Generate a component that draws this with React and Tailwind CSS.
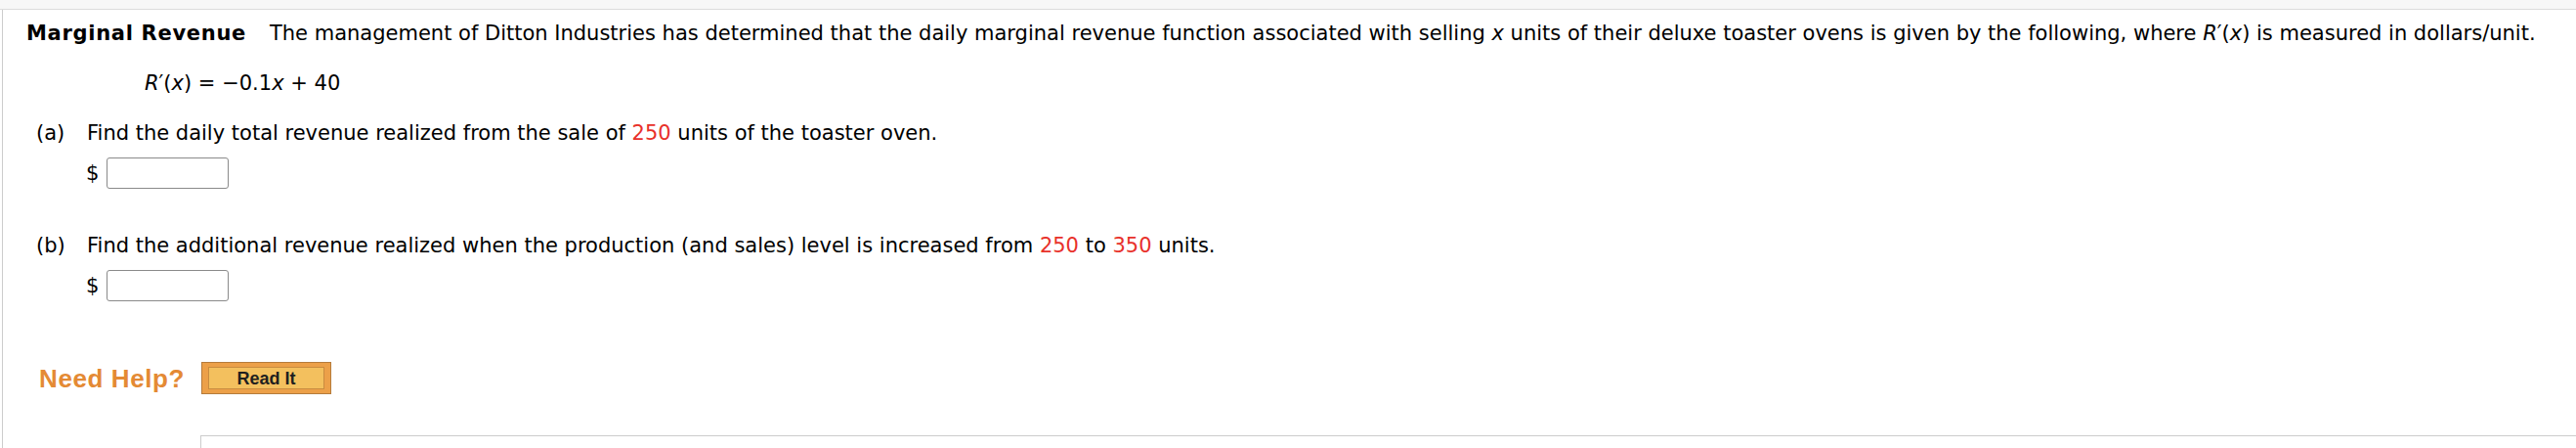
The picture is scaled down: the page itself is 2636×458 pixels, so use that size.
import React from "react";

const Red = ({ children }) => <span className="text-[#e8312a]">{children}</span>;

const AnswerBox = () => (
    <div className="flex items-center ml-[61px]">
        <span className="w-[21px]">$</span>
        <div className="w-[125px] h-[32px] border border-[#8a8a8a] rounded-[3px] bg-white" />
    </div>
);

const Part = ({ label, children }) => (
    <div className="flex ml-[10px]">
        <span className="w-[52px]">({label})</span>
        <span>{children}</span>
    </div>
);

export default function App() {
    return (
        <div className="min-h-screen bg-white text-black font-['DejaVu_Sans',Verdana,sans-serif] text-[21px] leading-[24px]">
            <div className="h-[10px] bg-[#f7f7f7] border-b border-[#dcdcdc]" />
            <div className="ml-[2px] border-l border-[#cccccc] pl-[24px] pt-[12px]">
                <p className="whitespace-nowrap">
                    <span className="font-bold tracking-[0.7px]">Marginal Revenue</span>
                    <span className="ml-[24px]">
                        The management of Ditton Industries has determined that the daily marginal revenue function associated with selling <i>x</i> units of their deluxe toaster ovens is given by the following, where <i>R</i>′(<i>x</i>) is measured in dollars/unit.
                    </span>
                </p>
                <p className="mt-[27px] ml-[121px]">
                    <i>R</i>′(<i>x</i>) = −0.1<i>x</i> + 40
                </p>

                <div className="mt-[27px]">
                    <Part label="a">
                        Find the daily total revenue realized from the sale of <Red>250</Red> units of the toaster oven.
                    </Part>
                    <div className="mt-[13px]">
                        <AnswerBox />
                    </div>
                </div>

                <div className="mt-[46px]">
                    <Part label="b">
                        Find the additional revenue realized when the production (and sales) level is increased from <Red>250</Red> to <Red>350</Red> units.
                    </Part>
                    <div className="mt-[13px]">
                        <AnswerBox />
                    </div>
                </div>

                <div className="flex items-center mt-[62px] ml-[13px] gap-[17px]">
                    <span className="font-['Liberation_Sans',Arial,sans-serif] font-bold text-[26px] tracking-[0.6px] text-[#e48a34]">Need Help?</span>
                    <button className="w-[133px] h-[33px] bg-[#eca049] border border-[#b57b3c] px-[6px] py-[4px]">
                        <span className="flex items-center justify-center w-full h-full bg-[#f3c05e] border border-[#c98c40] font-['Liberation_Sans',Arial,sans-serif] font-bold text-[18px] text-[#1f1f1f]">
                            Read It
                        </span>
                    </button>
                </div>

                <div className="mt-[42px] ml-[178px] h-[20px] border-t border-l border-[#cccccc]" />
            </div>
        </div>
    );
}
